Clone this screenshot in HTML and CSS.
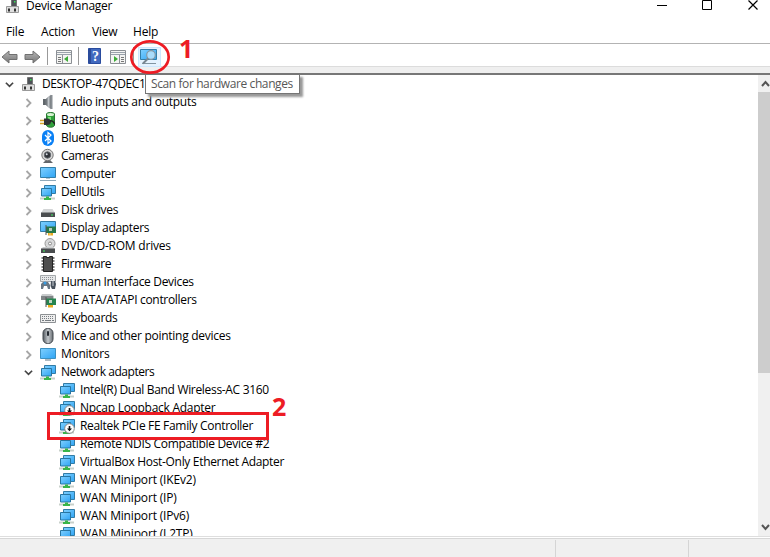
FILE: index.html
```html
<!DOCTYPE html>
<html lang="en">
<head>
<meta charset="utf-8">
<title>Device Manager</title>
<link rel="stylesheet" href="styles.css">
</head>
<body>
<svg class="defs" width="0" height="0">
  <defs>
    <linearGradient id="blue" x1="0" y1="0" x2="1" y2="1"><stop offset="0" stop-color="#7fd0ff"/><stop offset="1" stop-color="#2fa4f4"/></linearGradient>
    <linearGradient id="metal" x1="0" y1="0" x2="1" y2="0"><stop offset="0" stop-color="#555b61"/><stop offset=".5" stop-color="#c3c8cc"/><stop offset="1" stop-color="#6a6f74"/></linearGradient>
    <linearGradient id="arrow" x1="0" y1="0" x2="0" y2="1"><stop offset="0" stop-color="#b5b5b5"/><stop offset="1" stop-color="#777"/></linearGradient>
  </defs>
  <symbol id="i-pc" viewBox="0 0 16 16"><path d="M6.500 1.500h5v8h-5z" fill="#4e5257" stroke="#777"/><path d="M9 3h1.500v1.500H9z" fill="#36e052"/><path d="M1.500 8.500h12v6h-12z" fill="#dedede" stroke="#999"/><path d="M3 10.500h2v3H3zM9 10.500h2v3H9z" fill="#333"/></symbol>
  <symbol id="i-audio" viewBox="0 0 16 16"><path d="M3 5h3v6H3z" fill="#60666b"/><path d="M6 5l5-4v14l-5-4z" fill="url(#metal)" stroke="#8c9195" stroke-width=".6"/><path d="M11 1h1.500v14H11z" fill="#888e93"/></symbol>
  <symbol id="i-battery" viewBox="0 0 16 16"><path d="M6.500 2c0-2 8-2 8 0v11c0 3-8 3-8 0z" fill="#31a23c" stroke="#287832"/><ellipse cx="10.500" cy="2.500" rx="3.500" ry="1.500" fill="#d9f3d4"/><path d="M8 5h3v4H8z" fill="#79e278"/><path d="M4 6.500h3c3 0 4 2 4 3.500s-1 3-4 3H4z" fill="#303236"/><path d="M0 8.500h4M0 11.500h4" stroke="#d9a62b" stroke-width="1.500"/><path d="M10 9c4-1 4 3 5 3" fill="none" stroke="#222" stroke-width="1.500"/></symbol>
  <symbol id="i-bt" viewBox="0 0 16 16"><rect x="2" width="12" height="16" rx="6" fill="#0a80f5"/><path d="M5 5l6 6-3 2.500v-11L11 5l-6 6" fill="none" stroke="#fff" stroke-width="1.200"/></symbol>
  <symbol id="i-camera" viewBox="0 0 16 16"><path d="M3 15l3-3h4l3 3z" fill="#62666a"/><circle cx="7.500" cy="7" r="5.700" fill="#d5d5d5" stroke="#777"/><circle cx="7.500" cy="7" r="3.200" fill="#303338" stroke="#64696e"/><circle cx="6.700" cy="6.200" r="1" fill="#d7dce3"/></symbol>
  <symbol id="i-monitor" viewBox="0 0 16 16"><path d="M.5 1.500h15v10H.5z" fill="url(#blue)" stroke="#347fa9"/><path d="M6 12h4v1H6z" fill="#b3c4cf"/><path d="M0 14.500h16" stroke="#8fa9b9"/></symbol>
  <symbol id="i-net" viewBox="0 0 16 16"><path d="M4.500 1.500h11v8h-11z" fill="url(#blue)" stroke="#327ca6"/><path d="M1.500 4.500h10v7.500h-10z" fill="url(#blue)" stroke="#2876a2"/><path d="M0 14.500h15" stroke="#c8d0ca" stroke-width="2"/><path d="M6 12.500h3V14h2v2H4v-2h2z" fill="#39b54a"/></symbol>
  <symbol id="i-netdown" viewBox="0 0 16 16"><use href="#i-net"/><circle cx="10.500" cy="10.500" r="4.800" fill="#fff" stroke="#888"/><path d="M10.500 8v4" stroke="#111" stroke-width="1.600"/><path d="M8 10.500h5l-2.500 2.800z" fill="#111"/></symbol>
  <symbol id="i-disk" viewBox="0 0 16 16"><path d="M3.500 7h9l2.500 4H1z" fill="#d3d5d6"/><path d="M1 10.500h14v4.500H1z" fill="#4b4e50"/><path d="M11 12.500h2v1h-2z" fill="#41ef63"/></symbol>
  <symbol id="i-display" viewBox="0 0 16 16"><path d="M.5 1.500h15v10H.5z" fill="url(#blue)" stroke="#347fa9"/><path d="M6 6.500h10v6.500H6z" fill="#26784a"/><path d="M9 8h3v3H9z" fill="#b6cbbb"/><path d="M6 5v10" stroke="#555"/><path d="M8 13h5v2.500H8z" fill="#e9aa20"/><path d="M10 13v2.500" stroke="#fff" stroke-width=".5"/></symbol>
  <symbol id="i-dvd" viewBox="0 0 16 16"><circle cx="10" cy="5.500" r="5" fill="#d7d8d9" stroke="#999"/><circle cx="10" cy="5.500" r="1.500" fill="#fff" stroke="#888"/><path d="M3 9h10l2 2H1z" fill="#c9cccd"/><path d="M1 10.500h14V15H1z" fill="#4a4d4f"/><path d="M3 12.500h2v1H3z" fill="#43ed62"/></symbol>
  <symbol id="i-chip" viewBox="0 0 16 16"><path d="M1.500 2h13M1.500 5h13M1.500 8h13M1.500 11h13M1.500 14h13" stroke="#555" stroke-width="1.400"/><path d="M3.500.5h3v1h3v-1h3v15h-9z" fill="#4d4d4d" stroke="#222"/></symbol>
  <symbol id="i-hid" viewBox="0 0 16 16"><path d="M.5 1.500h15v6H.5z" fill="#e5e7e8" stroke="#a4a8ab"/><path d="M2 3.500h12M2 5.500h12" stroke="#8f9397" stroke-dasharray="1 1"/><path d="M1 15v-5l2-2h5l2 3v4H8l-1-3H4l-1 3z" fill="#697783"/><circle cx="5" cy="9" r="1.500" fill="#3b9de2"/><path d="M11 7h4l1 3-1 5h-3l-1.500-3z" fill="#47515c"/><path d="M13 7v5" stroke="#cbd1d6"/></symbol>
  <symbol id="i-ide" viewBox="0 0 16 16"><path d="M2 2h9l3 2v3H1V4z" fill="#c8cbcc"/><path d="M1 4h12v4H1z" fill="#818688"/><path d="M6 6.500h10v6.500H6z" fill="#26844f"/><path d="M9 8h3v3H9z" fill="#c1d5c5"/><path d="M6 5v10" stroke="#555"/><path d="M8 13h5v2.500H8z" fill="#e9aa20"/></symbol>
  <symbol id="i-keyboard" viewBox="0 0 16 16"><path d="M.5 4.500h15v8H.5z" fill="#eee" stroke="#8d9194"/><path d="M2 6.500h12M2 8.500h12" stroke="#777d82" stroke-dasharray="1 1"/><path d="M2 10.500h2M5 10.500h6M12 10.500h2" stroke="#777d82"/></symbol>
  <symbol id="i-mouse" viewBox="0 0 16 16"><rect x="3" y=".5" width="10" height="15" rx="4.500" fill="url(#metal)" stroke="#42484e"/><rect x="7" y="3" width="2" height="5" rx="1" fill="#252a31"/></symbol>
  <symbol id="i-screen" viewBox="0 0 16 16"><path d="M.5 2.500h15v10H.5z" fill="url(#blue)" stroke="#3c91c2"/><path d="M5 14h6" stroke="#91a3af" stroke-width="1.500"/></symbol>
  <symbol id="i-right" viewBox="0 0 8 10"><path d="M2 1l4 4-4 4" fill="none" stroke="#a6a6a6" stroke-width="1.800"/></symbol>
  <symbol id="i-open" viewBox="0 0 10 8"><path d="M1 1.500l4 4 4-4" fill="none" stroke="#454545" stroke-width="1.900"/></symbol>
</svg>

<div class="window">
  <header class="titlebar">
    <svg class="app-icon" width="16" height="16"><use href="#i-pc"/></svg>
    <span class="title">Device Manager</span>
    <svg class="controls" width="104" height="12" fill="none" stroke="#000"><path d="M0 5.500h10"/><path d="M45.500.5h9v9h-9z"/><path d="M91.500 .5l9 9M100.500 .5l-9 9" stroke-width="1.200"/></svg>
  </header>
  <nav class="menu"><span class="m-file">File</span><span class="m-action">Action</span><span class="m-view">View</span><span class="m-help">Help</span></nav>
  <div class="toolbar">
    <svg width="17" height="16" class="tool back"><path d="M1 8l7-6v3.500h8v5H8V14z" fill="url(#arrow)" stroke="#707070"/></svg>
    <svg width="17" height="16" class="tool forward"><path d="M16 8L9 2v3.500H1v5h8V14z" fill="url(#arrow)" stroke="#707070"/></svg>
    <i class="sep"></i>
    <svg width="16" height="16" class="tool tree-tool"><path d="M.5 1.500h15v13H.5z" fill="#f4f4f2" stroke="#8b8f94"/><path d="M1 3.500h14M1 5.500h14" stroke="#9aa2ab"/><path d="M6.500 6v8" stroke="#8b8f94"/><path d="M2 8.500h3M2 10.500h3M2 12.500h3" stroke="#777"/><path d="M12 7v6L8 10z" fill="#3baa35"/></svg>
    <i class="sep sep-two"></i>
    <svg width="14" height="17" class="tool help-tool"><path d="M.5.500h12v15H.5z" fill="#4169bf" stroke="#294b9e"/><path d="M1 1h2v14H1z" fill="#2c4c9a"/><text x="7.500" y="13" text-anchor="middle" class="question">?</text></svg>
    <svg width="16" height="16" class="tool action-tool"><path d="M.5 1.500h15v13H.5z" fill="#f4f4f2" stroke="#8b8f94"/><path d="M1 3.500h14M1 5.500h14" stroke="#9aa2ab"/><path d="M9.500 6v8" stroke="#8b8f94"/><path d="M11 8.500h3M11 10.500h3M11 12.500h3" stroke="#777"/><path d="M4 7v6l4-3z" fill="#3baa35"/></svg>
    <i class="sep sep-three"></i>
    <span class="scan"><svg width="18" height="17"><path d="M.5 .5h16v10H.5z" fill="url(#blue)" stroke="#347fa9"/><path d="M2 14.500h14" stroke="#8295a2"/><circle cx="11" cy="6" r="4.300" fill="#a9dcfb" stroke="#8798a4" stroke-width="1.200"/><path d="M8 9.500l-5 5" stroke="#788791" stroke-width="2"/></svg></span>
  </div>
  <div class="band"></div>
  <main class="content">
    <div class="tree">
      <div class="row root"><svg class="chev"><use href="#i-open"/></svg><svg class="icon"><use href="#i-pc"/></svg><span>DESKTOP-47QDEC1</span></div>
      <div class="row"><svg class="chev"><use href="#i-right"/></svg><svg class="icon"><use href="#i-audio"/></svg><span class="snug">Audio inputs and outputs</span></div>
      <div class="row"><svg class="chev"><use href="#i-right"/></svg><svg class="icon"><use href="#i-battery"/></svg><span class="tight">Batteries</span></div>
      <div class="row"><svg class="chev"><use href="#i-right"/></svg><svg class="icon"><use href="#i-bt"/></svg><span class="snug">Bluetooth</span></div>
      <div class="row"><svg class="chev"><use href="#i-right"/></svg><svg class="icon"><use href="#i-camera"/></svg><span class="tight">Cameras</span></div>
      <div class="row"><svg class="chev"><use href="#i-right"/></svg><svg class="icon"><use href="#i-monitor"/></svg><span>Computer</span></div>
      <div class="row"><svg class="chev"><use href="#i-right"/></svg><svg class="icon"><use href="#i-net"/></svg><span class="tight">DellUtils</span></div>
      <div class="row"><svg class="chev"><use href="#i-right"/></svg><svg class="icon"><use href="#i-disk"/></svg><span class="tight">Disk drives</span></div>
      <div class="row"><svg class="chev"><use href="#i-right"/></svg><svg class="icon"><use href="#i-display"/></svg><span class="tight">Display adapters</span></div>
      <div class="row"><svg class="chev"><use href="#i-right"/></svg><svg class="icon"><use href="#i-dvd"/></svg><span>DVD/CD-ROM drives</span></div>
      <div class="row"><svg class="chev"><use href="#i-right"/></svg><svg class="icon"><use href="#i-chip"/></svg><span class="tight">Firmware</span></div>
      <div class="row"><svg class="chev"><use href="#i-right"/></svg><svg class="icon"><use href="#i-hid"/></svg><span class="tight">Human Interface Devices</span></div>
      <div class="row"><svg class="chev"><use href="#i-right"/></svg><svg class="icon"><use href="#i-ide"/></svg><span class="tight">IDE ATA/ATAPI controllers</span></div>
      <div class="row"><svg class="chev"><use href="#i-right"/></svg><svg class="icon"><use href="#i-keyboard"/></svg><span class="tight">Keyboards</span></div>
      <div class="row"><svg class="chev"><use href="#i-right"/></svg><svg class="icon"><use href="#i-mouse"/></svg><span class="snug">Mice and other pointing devices</span></div>
      <div class="row"><svg class="chev"><use href="#i-right"/></svg><svg class="icon"><use href="#i-screen"/></svg><span class="snug">Monitors</span></div>
      <div class="row"><svg class="chev"><use href="#i-open"/></svg><svg class="icon"><use href="#i-net"/></svg><span class="tighter">Network adapters</span></div>
      <div class="row child"><svg class="icon"><use href="#i-net"/></svg><span class="tight">Intel(R) Dual Band Wireless-AC 3160</span></div>
      <div class="row child"><svg class="icon"><use href="#i-netdown"/></svg><span class="snug">Npcap Loopback Adapter</span></div>
      <div class="row child"><svg class="icon"><use href="#i-netdown"/></svg><span class="tight">Realtek PCIe FE Family Controller</span></div>
      <div class="row child"><svg class="icon"><use href="#i-net"/></svg><span class="tight">Remote NDIS Compatible Device #2</span></div>
      <div class="row child"><svg class="icon"><use href="#i-net"/></svg><span class="tight">VirtualBox Host-Only Ethernet Adapter</span></div>
      <div class="row child"><svg class="icon"><use href="#i-net"/></svg><span class="loose">WAN Miniport (IKEv2)</span></div>
      <div class="row child"><svg class="icon"><use href="#i-net"/></svg><span class="loose">WAN Miniport (IP)</span></div>
      <div class="row child"><svg class="icon"><use href="#i-net"/></svg><span class="loose">WAN Miniport (IPv6)</span></div>
      <div class="row child"><svg class="icon"><use href="#i-net"/></svg><span class="loose">WAN Miniport (L2TP)</span></div>
    </div>
    <div class="scrollbar"><svg width="12" height="17"><path d="M4 11l3.500-4 3.500 4" fill="none" stroke="#555" stroke-width="2"/></svg><div class="thumb"></div><svg class="down" width="12" height="17"><path d="M4 6l3.500 4L11 6" fill="none" stroke="#555" stroke-width="2"/></svg></div>
  </main>
  <footer class="status"><span></span><span></span><span></span></footer>
  <div class="tooltip">Scan for hardware changes</div>
  <svg class="ring" width="42" height="36"><ellipse cx="21" cy="18" rx="18.700" ry="15.700" fill="none" stroke="#ed1c24" stroke-width="2.700"/></svg>
  <div class="mark one">1</div>
  <div class="mark two">2</div>
  <div class="box"></div>
</div>
</body>
</html>
```
FILE: styles.css
```css
* { box-sizing: border-box; }
body { margin: 0; background: #fff; font: 12px/18px "Open Sans", "Noto Sans", sans-serif; color: #000; }
svg { display: block; flex: none; }
.defs { position: absolute; }
.window { position: relative; width: 770px; height: 557px; overflow: hidden; display: flex; flex-direction: column; }
.titlebar { height: 22px; display: flex; padding-left: 5px; }
.app-icon { margin-top: -2px; }
.title { margin: 0 0 0 5px; line-height: 12px; letter-spacing: -.25px; }
.controls { margin-left: auto; margin-right: 9px; }
.menu { height: 21px; display: flex; letter-spacing: -.2px; }
.menu span { padding-top: 1px; }
.m-file { width: 41px; padding-left: 6px; }
.m-action { width: 51px; }
.m-view { width: 41px; }
.toolbar { height: 24px; border-top: 1px solid #b3b3b3; border-bottom: 1px solid #dcdcdc; display: flex; align-items: flex-start; padding-left: 1px; }
.tool { margin-top: 5px; }
.forward { margin-left: 6px; }
.sep { width: 1px; height: 18px; margin: 3px 0 0 6px; background: #999; }
.tree-tool { margin-left: 8px; }
.sep-two { margin-left: 6px; }
.help-tool { margin: 4px 0 0 9px; }
.question { font: bold 14px "Liberation Serif", serif; fill: #fff; }
.action-tool { margin-left: 8px; }
.sep-three { margin-left: 7px; }
.scan { width: 23px; height: 20px; margin: 3px 0 0 4px; padding: 1px 1px; background: #e5f3ff; border: 1px solid #cce8ff; }
.band { height: 8px; background: #efefef; border-bottom: 2px solid #777; }
.content { height: 461px; display: flex; }
.tree { flex: 1; overflow: hidden; }
.row { height: 18px; display: flex; padding-left: 24px; white-space: nowrap; letter-spacing: -.22px; }
.row.root { padding-left: 5px; letter-spacing: -.38px; }
.row.child { padding-left: 59px; }
.snug { letter-spacing: -.27px; }
.tight { letter-spacing: -.32px; }
.tighter { letter-spacing: -.46px; }
.loose { letter-spacing: -.17px; }
.chev { width: 9px; height: 10px; margin: 5px 7px 0 0; }
.icon { width: 16px; height: 16px; margin: 1px 5px 0 0; }
.scrollbar { width: 12px; background: #f0f0f0; display: flex; flex-direction: column; }
.thumb { height: 281px; background: #cdcdcd; }
.down { margin-top: auto; }
.status { height: 21px; border-top: 1px solid #dedede; background: #f0f0f0; display: flex; box-shadow: inset 0 1px #fff, inset 0 2px #d7d7d7; padding-top: 3px; }
.status span:nth-child(1) { width: 556px; border-right: 1px solid #d5d5d5; }
.status span:nth-child(2) { width: 133px; border-right: 1px solid #d5d5d5; }
.tooltip { position: absolute; left: 145px; top: 74px; width: 155px; height: 20px; border: 1px solid #767676; background: #fff; color: #575757; padding-left: 5px; white-space: nowrap; letter-spacing: -.4px; box-shadow: 3px 3px 2px #999; }
.ring { position: absolute; left: 129px; top: 39px; }
.mark { position: absolute; color: #ed1c24; font: bold 25px/25px "Open Sans", sans-serif; }
.one { left: 179px; top: 36px; }
.two { left: 272px; top: 394px; }
.box { position: absolute; left: 47px; top: 412px; width: 222px; height: 28px; border: 3px solid #ed1c24; }
```
